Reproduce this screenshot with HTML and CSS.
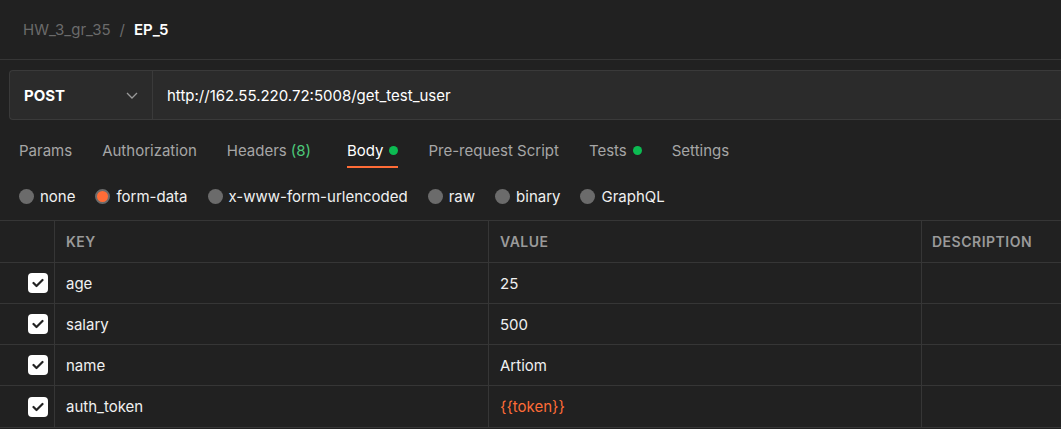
FILE: index.html
```html
<!DOCTYPE html>
<html>
<head>
<meta charset="utf-8">
<link rel="stylesheet" href="styles.css">
</head>
<body>
<div class="crumbs">
  <span class="crumb-parent">HW_3_gr_35</span>
  <span class="crumb-sep">/</span>
  <span class="crumb-cur">EP_5</span>
</div>
<div class="urlbar">
  <div class="method">
    <span>POST</span>
    <svg class="chev" width="12" height="7" viewBox="0 0 12 7"><path d="M1 1 L6 6 L11 1" fill="none" stroke="#9a9a9a" stroke-width="1.3"/></svg>
  </div>
  <div class="url">http://162.55.220.72:5008/get_test_user</div>
</div>
<div class="tabs">
  <div class="tab">Params</div>
  <div class="tab">Authorization</div>
  <div class="tab wide">Headers <span class="count">(8)</span></div>
  <div class="tab active">Body <span class="dot"></span></div>
  <div class="tab">Pre-request Script</div>
  <div class="tab">Tests <span class="dot"></span></div>
  <div class="tab">Settings</div>
</div>
<div class="radios">
  <label class="radio"><span class="circle"></span>none</label>
  <label class="radio"><span class="circle on"></span>form-data</label>
  <label class="radio"><span class="circle"></span>x-www-form-urlencoded</label>
  <label class="radio"><span class="circle"></span>raw</label>
  <label class="radio"><span class="circle"></span>binary</label>
  <label class="radio"><span class="circle"></span>GraphQL</label>
</div>
<div class="table">
  <div class="row head">
    <div class="cell chk"></div>
    <div class="cell">KEY</div>
    <div class="cell">VALUE</div>
    <div class="cell">DESCRIPTION</div>
  </div>
  <div class="row">
    <div class="cell chk"><span class="box"><svg width="12" height="10" viewBox="0 0 12 10"><path d="M1.5 5 L4.5 8 L10.5 2" fill="none" stroke="#222" stroke-width="2.2" stroke-linecap="round" stroke-linejoin="round"/></svg></span></div>
    <div class="cell">age</div>
    <div class="cell">25</div>
    <div class="cell"></div>
  </div>
  <div class="row">
    <div class="cell chk"><span class="box"><svg width="12" height="10" viewBox="0 0 12 10"><path d="M1.5 5 L4.5 8 L10.5 2" fill="none" stroke="#222" stroke-width="2.2" stroke-linecap="round" stroke-linejoin="round"/></svg></span></div>
    <div class="cell">salary</div>
    <div class="cell">500</div>
    <div class="cell"></div>
  </div>
  <div class="row">
    <div class="cell chk"><span class="box"><svg width="12" height="10" viewBox="0 0 12 10"><path d="M1.5 5 L4.5 8 L10.5 2" fill="none" stroke="#222" stroke-width="2.2" stroke-linecap="round" stroke-linejoin="round"/></svg></span></div>
    <div class="cell">name</div>
    <div class="cell">Artiom</div>
    <div class="cell"></div>
  </div>
  <div class="row last">
    <div class="cell chk"><span class="box"><svg width="12" height="10" viewBox="0 0 12 10"><path d="M1.5 5 L4.5 8 L10.5 2" fill="none" stroke="#222" stroke-width="2.2" stroke-linecap="round" stroke-linejoin="round"/></svg></span></div>
    <div class="cell">auth_token</div>
    <div class="cell var">{{token}}</div>
    <div class="cell"></div>
  </div>
</div>
</body>
</html>
```
FILE: styles.css
```css
html, body {
  margin: 0;
  padding: 0;
  background: #212121;
  font-family: Inter, "Noto Sans", sans-serif;
  font-size: 15px;
  color: #f0f0f0;
  overflow: hidden;
}
.crumbs {
  height: 59px;
  border-bottom: 1px solid #363636;
  display: flex;
  align-items: center;
  padding-left: 23px;
  gap: 9px;
}
.crumb-parent, .crumb-sep { color: #6b6b6b; }
.crumb-cur { color: #ffffff; font-weight: 600; }
.urlbar {
  margin: 10px 0 0 9px;
  height: 48px;
  display: flex;
  background: #2b2b2b;
  border: 1px solid #3a3a3a;
  border-right: none;
  border-radius: 4px 0 0 4px;
}
.method {
  width: 143px;
  border-right: 1px solid #3a3a3a;
  display: flex;
  align-items: center;
  justify-content: space-between;
  padding: 0 14px 0 14px;
  box-sizing: border-box;
  font-weight: 700;
  color: #ffffff;
}
.url {
  display: flex;
  align-items: center;
  padding-left: 14px;
  color: #ffffff;
}
.tabs {
  display: flex;
  height: 49px;
  padding-left: 19px;
}
.tab {
  position: relative;
  display: flex;
  align-items: center;
  gap: 6px;
  color: #a6a6a6;
  margin-right: 30px;
  height: 48px;
  padding-top: 12px;
  box-sizing: border-box;
}
.tab.wide { margin-right: 36px; }
.tab.active { color: #ffffff; }
.tab.active::after {
  content: "";
  position: absolute;
  left: 0;
  right: 0;
  bottom: 0;
  height: 2px;
  background: #ff6c37;
}
.count { color: #4dc97a; margin-left: -2px; }
.dot {
  width: 9px;
  height: 9px;
  border-radius: 50%;
  background: #0cbb52;
  display: inline-block;
}
.radios {
  display: flex;
  align-items: center;
  height: 51px;
  padding: 3px 0 0 19px;
  box-sizing: border-box;
  gap: 20px;
}
.radio {
  display: flex;
  align-items: center;
  gap: 6px;
  color: #f0f0f0;
}
.circle {
  width: 15px;
  height: 15px;
  border-radius: 50%;
  background: #6b6b6b;
  box-sizing: border-box;
  display: inline-block;
}
.circle.on {
  background: #ff6c37;
  border: 2px solid #6b6b6b;
}
.table {
  border-top: 1px solid #363636;
}
.row {
  display: grid;
  grid-template-columns: 54px 434px 433px 1fr;
  height: 41px;
  box-sizing: border-box;
  border-bottom: 1px solid #363636;
}
.row.head { height: 42px; }
.row.last { height: 42px; }
.cell {
  display: flex;
  align-items: center;
  padding-left: 11px;
  border-left: 1px solid #363636;
  color: #f0f0f0;
}
.row .cell:nth-child(4) { padding-left: 10px; }
.cell.chk {
  border-left: none;
  padding-left: 28px;
}
.head .cell {
  font-size: 14px;
  font-weight: 600;
  color: #9a9a9a;
  letter-spacing: 0.5px;
}
.box {
  width: 20px;
  height: 20px;
  border-radius: 4px;
  background: #ffffff;
  display: flex;
  align-items: center;
  justify-content: center;
}
.var { color: #ff6c37; }
```
